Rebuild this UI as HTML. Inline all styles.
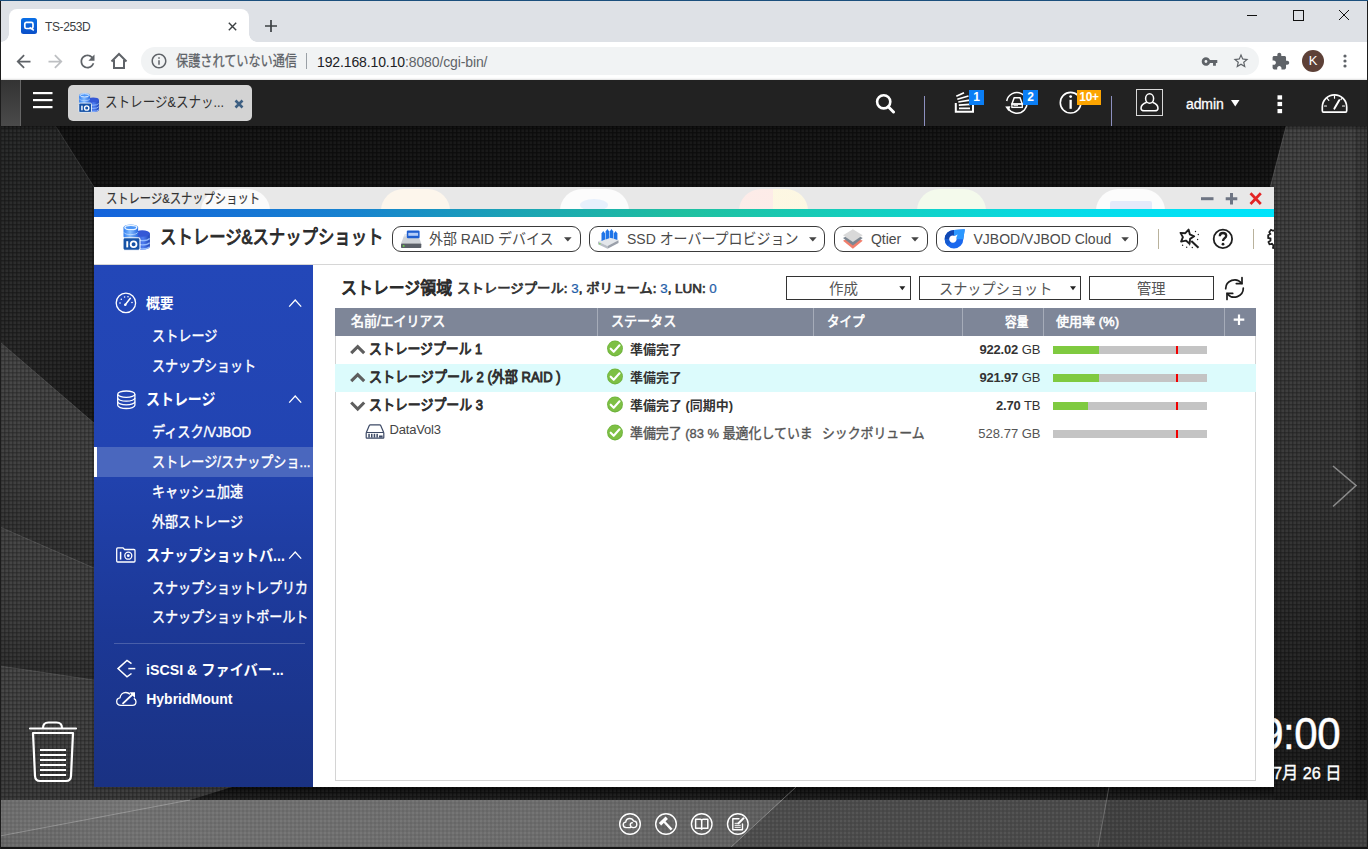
<!DOCTYPE html>
<html lang="ja">
<head>
<meta charset="utf-8">
<title>TS-253D</title>
<style>
*{box-sizing:border-box;margin:0;padding:0}
html,body{width:1368px;height:849px;overflow:hidden;background:#141414;font-family:"Liberation Sans",sans-serif}
.abs,.t{position:absolute}
svg.t{overflow:visible;pointer-events:none}
svg.t text{font-family:"Liberation Sans","Noto Sans CJK JP",sans-serif}
#page{position:relative;width:1368px;height:849px;overflow:hidden}
/* ---------- browser chrome ---------- */
#tabstrip{left:0;top:0;width:1368px;height:42px;background:#dee1e6;border-top:1px solid #1b4f7d}
#tab{left:9px;top:9px;width:240px;height:33px;background:#fff;border-radius:8px 8px 0 0}
#tab:before,#tab:after{content:"";position:absolute;bottom:0;width:8px;height:8px;background:radial-gradient(circle at 0 0,rgba(255,255,255,0) 7.5px,#fff 8px)}
#tab:before{left:-8px}
#tab:after{right:-8px;transform:scaleX(-1)}
#tabtitle{left:45px;top:20px;font-size:12px;line-height:14px;color:#3c4043;letter-spacing:-.4px}
#toolbar{left:0;top:42px;width:1368px;height:38px;background:#fff}
#omni{left:141px;top:47px;width:1118px;height:28px;border-radius:14px;background:#f1f3f4}
#url{left:317px;top:54px;font-size:14px;line-height:16px;color:#202124;white-space:nowrap;letter-spacing:-.12px}
#url span{color:#5f6368}
#lborder{left:0;top:1px;width:1px;height:848px;background:#1c1c1c}
#rborder{left:1367px;top:1px;width:1px;height:848px;background:#1c1c1c}
/* ---------- QTS top bar ---------- */
#topbar{left:0;top:80px;width:1368px;height:46px;background:#222;box-shadow:0 1px 3px rgba(0,0,0,.6)}
#showdesk{left:1px;top:80px;width:20px;height:46px;background:linear-gradient(#333,#4a4a4a);border-right:1px solid #666}
#apptab{left:68px;top:85px;width:184px;height:36px;border-radius:5px;background:#d3d3d3}
.vsep{width:1px;height:30px;top:96px;background:#8d90c0}
.badge{height:15px;top:90px;color:#fff;font-weight:bold;font-size:12px;line-height:15px;text-align:center}
#admin{left:1186px;top:95.5px;font-size:14px;line-height:16px;color:#fff;letter-spacing:-.1px;-webkit-text-stroke:.3px #fff}
/* ---------- window ---------- */
#win{left:94px;top:187px;width:1180px;height:600px;background:#fff;overflow:hidden;box-shadow:0 0 3px rgba(0,0,0,.35)}
#titlebar{left:0;top:0;width:1180px;height:22px;background:#e8e8e8;overflow:hidden}
.ghost{top:2px;width:69px;height:60px;border-radius:22px;background:rgba(255,255,255,.75)}
#gradbar{left:0;top:22px;width:1180px;height:8px;background:linear-gradient(90deg,#1463dc 0%,#1783cf 22%,#1ba4b4 36%,#1fc0a0 50%,#14cfc0 66%,#06dcea 84%,#00e4fb 100%)}
#header{left:0;top:30px;width:1180px;height:48px;background:#fff;border-bottom:1px solid #d6d6d6}
.pill{top:39px;height:26px;border:1px solid #3a3a3a;border-radius:9px;background:#fff}
.pilltxt{font-size:14px;line-height:16px;color:#4a4a4a;top:44px;white-space:nowrap}
.caret{width:0;height:0;border-left:4.5px solid transparent;border-right:4.5px solid transparent;border-top:6px solid #444;top:50px}
.hsep{width:1px;height:20px;top:42px;background:#b9b29c}
#sidebar{left:0;top:78px;width:219px;height:522px;background:linear-gradient(#2347b8 0%,#2244b2 35%,#1c3896 70%,#1a3283 100%)}
#sel{left:0;top:258px;width:219px;height:32px;background:#4a66bd;border-left:3px solid #fff}
#sbsep{left:20px;top:456px;width:192px;height:1px;background:rgba(255,255,255,.28)}
.sbt{color:#fff;font-weight:bold;font-size:14px;line-height:16px;white-space:nowrap}
#content{left:219px;top:78px;width:961px;height:522px;background:#fff}
.btn{top:89px;height:24px;border:1px solid #333;background:#fff}
.bcaret{width:0;height:0;border-left:3px solid transparent;border-right:3px solid transparent;border-top:4px solid #222;top:100px}
#panel{left:240px;top:121px;width:922px;height:474px;border:1px solid #d4d4d4;background:#fff}
#thead{left:240px;top:121px;width:922px;height:28px;background:#7e8698}
.csep{top:121px;width:1px;height:28px;background:#a4aab8}
#rowsel{left:241px;top:177px;width:920px;height:28px;background:#dcfbfc}
.bar{left:959px;width:154px;height:8px;background:#c4c4c4}
.bar i{position:absolute;left:0;top:0;height:8px;background:#7fca40}
.bar b{position:absolute;left:123px;top:0;width:2px;height:8px;background:#f20000}
.cap{width:100px;left:847px;text-align:right;font-size:13px;line-height:16px;color:#333;white-space:nowrap}
.cap b{letter-spacing:-.2px}
.dv{left:296px;top:235px;font-size:13px;line-height:16px;color:#444;letter-spacing:-.2px}
/* ---------- desktop bits ---------- */
#taskbar{left:0;top:800px;width:1368px;height:47px;background:#575757}
#tbbottom{left:0;top:847px;width:1368px;height:2px;background:#161616}
#clock{left:1180px;top:708.500px;width:160px;text-align:right;font-size:43.500px;line-height:50px;color:#fff;letter-spacing:-.5px;transform:scaleX(.965);transform-origin:100% 50%;-webkit-text-stroke:.5px #fff}
</style>
</head>
<body>
<div id="page">

<svg class="abs" id="desk" style="left:0;top:80px" width="1368" height="769" viewBox="0 80 1368 769">
<defs>
<pattern id="dots" width="4" height="4" patternUnits="userSpaceOnUse"><rect width="4" height="4" fill="none"/><rect x="0" y="0" width="4" height="1.500" fill="#000" opacity=".16"/><rect x="0" y="0" width="1.500" height="4" fill="#000" opacity=".16"/><rect x="1.500" y="1.500" width="2.500" height="2.500" fill="#fff" opacity=".035"/></pattern>
<pattern id="dots2" width="4" height="4" patternUnits="userSpaceOnUse"><rect x="0" y="0" width="2" height="2" fill="#fff" opacity=".06"/><rect x="2" y="2" width="2" height="2" fill="#000" opacity=".06"/></pattern>
<linearGradient id="lg1" x1="0" y1="0" x2="0.45" y2="1"><stop offset="0" stop-color="#232424"/><stop offset=".5" stop-color="#252525"/><stop offset=".8" stop-color="#1a1a1a"/><stop offset="1" stop-color="#151515"/></linearGradient>
<linearGradient id="lg2" x1="0.3" y1="0" x2="0" y2="1"><stop offset="0" stop-color="#454545"/><stop offset=".5" stop-color="#3a3a3a"/><stop offset="1" stop-color="#222"/></linearGradient>
<linearGradient id="lg3" x1="0.15" y1="0" x2="0" y2="1"><stop offset="0" stop-color="#424242"/><stop offset=".55" stop-color="#383838"/><stop offset="1" stop-color="#242424"/></linearGradient>
<linearGradient id="lg4" x1="0" y1="0" x2="0" y2="1"><stop offset="0" stop-color="#434343"/><stop offset="1" stop-color="#383838"/></linearGradient>
<linearGradient id="rg1" x1="0" y1="0" x2="0" y2="1"><stop offset="0" stop-color="#404040"/><stop offset=".3" stop-color="#3a3a3a"/><stop offset=".55" stop-color="#333"/><stop offset=".8" stop-color="#202020"/><stop offset="1" stop-color="#171717"/></linearGradient>
<linearGradient id="tb" x1="0" y1="0" x2="1" y2="0"><stop offset="0" stop-color="#666"/><stop offset=".1" stop-color="#707070"/><stop offset=".4" stop-color="#6c6c6c"/><stop offset=".56" stop-color="#5e5e5e"/><stop offset="1" stop-color="#5a5a5a"/></linearGradient>
<linearGradient id="gap" gradientUnits="userSpaceOnUse" x1="0" y1="787" x2="0" y2="800"><stop offset="0" stop-color="#0b0b0b"/><stop offset="1" stop-color="#1f1f1f"/></linearGradient>
</defs>
<rect x="0" y="80" width="1368" height="769" fill="#111"/>
<polygon points="0,120 55,125 200,355 200,520 0,342" fill="url(#lg1)"/>
<polygon points="0,342 200,514 200,620 0,527" fill="url(#lg2)"/>
<polygon points="0,527 200,614 200,700 0,666" fill="url(#lg3)"/>
<polygon points="0,666 260,705 260,800 0,800" fill="url(#lg4)"/>
<polygon points="1287.600,120 1368,120 1368,800 1110,800" fill="url(#rg1)"/>
<rect x="1355" y="125" width="13" height="675" fill="#000" opacity=".12"/>
<polygon points="232,787 1274,787 1274,800 190,800" fill="url(#gap)"/>
<rect x="0" y="800" width="1368" height="47" fill="url(#tb)"/>
<polygon points="0,800 190,800 0,836" fill="#fff" opacity=".04"/>
<polygon points="731,847 782,800 1368,800 1368,847" fill="#000" opacity=".2"/><polygon points="1098,847 1106.600,800 1368,800 1368,847" fill="#000" opacity=".12"/>
<rect x="0" y="120" width="1368" height="680" fill="url(#dots)"/><rect x="0" y="800" width="1368" height="47" fill="url(#dots2)"/>
<g stroke="#fff" stroke-width="1" fill="none">
<path d="M55,125 94,187" opacity=".10"/>
<path d="M0,342 94,423" opacity=".10"/><path d="M0,527 94,568" opacity=".12"/><path d="M0,666 94,680" opacity=".12"/>
<path d="M1286.300,125 1270.500,186" opacity=".14"/>
<path d="M0,836 190,800" opacity=".25"/><path d="M729,849 796,787" opacity=".3"/><path d="M1098,847 1109,787" opacity=".22"/>
</g>
<rect x="0" y="847" width="1368" height="2" fill="#151515"/>
<!-- trash -->
<g fill="none" stroke="#fff" stroke-width="2.2" stroke-linecap="round" stroke-linejoin="round">
<path d="M30,728.5H76"/><path d="M43,728 Q43,722.5 48.5,722.5H56.5Q62,722.5 62,728"/>
<path d="M33,733H73L71,776Q70.7,781 66,781H40Q35.3,781 35,776Z"/>
</g>
<g stroke="#fff" stroke-width="2" stroke-linecap="butt"><path d="M40,750H66M40,755H66M40,760H66M40,765H66M40,770H66M40,775H66"/></g>
<!-- next arrow -->
<path d="M1333,466 1356,485.5 1333,506.5" fill="none" stroke="#8a8a8a" stroke-width="1.6"/>
</svg>
<div class="abs" id="clock">9:00</div>
<svg class="t " role="img" aria-label="7月 26 日" style="left:1273.4px;top:760.8px" width="70.6" height="24" fill="#fff"><text x="0" y="18.05" font-size="16.8" fill="#fff" stroke="#fff" stroke-width="0.37" textLength="68.6" lengthAdjust="spacingAndGlyphs">7月 26 日</text></svg>

<div class="abs" id="tabstrip"></div>
<div class="abs" id="tab"></div>
<svg class="abs" style="left:21px;top:18px" width="16" height="16" viewBox="0 0 16 16"><defs><linearGradient id="fav" x1="0" y1="0" x2="0" y2="1"><stop offset="0" stop-color="#0a6fe6"/><stop offset="1" stop-color="#0a4fc8"/></linearGradient></defs><rect width="16" height="16" rx="2.5" fill="url(#fav)"/><rect x="3.8" y="4.3" width="8.2" height="6.2" rx="1.6" fill="none" stroke="#fff" stroke-width="1.7"/><path d="M8.600 9.300L12.800 12.300" stroke="#fff" stroke-width="1.500"/></svg>
<div class="abs" id="tabtitle">TS-253D</div>
<svg class="abs" style="left:228px;top:21.5px" width="9" height="9" viewBox="0 0 9 9"><path d="M.8.800l7.400 7.400M8.200.800L.8 8.200" stroke="#3c4043" stroke-width="1.400"/></svg>
<svg class="abs" style="left:264px;top:19px" width="14" height="14" viewBox="0 0 14 14"><path d="M7 1v12M1 7h12" stroke="#3c4043" stroke-width="1.700"/></svg>
<svg class="abs" style="left:1240px;top:5px" width="120" height="22" viewBox="1240 5 120 22" fill="none" stroke="#111" stroke-width="1"><path d="M1247,15.500H1257"/><rect x="1293.500" y="10.500" width="10" height="10"/><path d="M1339,10 1349,20M1349,10 1339,20"/></svg>
<div class="abs" id="toolbar"></div>
<div class="abs" id="omni"></div>
<svg class="abs" style="left:12.5px;top:50.5px" width="21" height="21" viewBox="0 0 24 24" fill="#5f6368" ><path d="M20 11H7.83l5.59-5.59L12 4l-8 8 8 8 1.41-1.41L7.83 13H20v-2z"/></svg><svg class="abs" style="transform:scaleX(-1);left:44.5px;top:50.5px" width="21" height="21" viewBox="0 0 24 24" fill="#bdbfc2"><path d="M20 11H7.83l5.59-5.59L12 4l-8 8 8 8 1.41-1.41L7.83 13H20v-2z"/></svg><svg class="abs" style="left:76.5px;top:50.5px" width="21" height="21" viewBox="0 0 24 24" fill="#5f6368" ><path d="M17.65 6.35C16.2 4.9 14.21 4 12 4c-4.42 0-7.99 3.58-7.99 8s3.57 8 7.99 8c3.73 0 6.84-2.55 7.73-6h-2.08c-.82 2.33-3.04 4-5.65 4-3.31 0-6-2.69-6-6s2.69-6 6-6c1.66 0 3.14.69 4.22 1.78L13 11h7V4l-2.35 2.35z"/></svg>
<svg class="abs" style="left:109px;top:51px" width="20" height="20" viewBox="0 0 20 20" fill="none" stroke="#5f6368" stroke-width="2" stroke-linejoin="miter"><path d="M2.500,10.500 10,3 17.500,10.500"/><path d="M5,9V17H15V9"/></svg>
<svg class="abs" style="left:150.0px;top:52.0px" width="18" height="18" viewBox="0 0 24 24" fill="#5f6368" ><path d="M11 7h2v2h-2zm0 4h2v6h-2zm1-9C6.48 2 2 6.48 2 12s4.48 10 10 10 10-4.48 10-10S17.52 2 12 2zm0 18c-4.41 0-8-3.59-8-8s3.590-8 8-8 8 3.590 8 8-3.590 8-8 8z"/></svg><svg class="t " role="img" aria-label="保護されていない通信" style="left:176.0px;top:50.8px" width="123.0" height="20" fill="#5f6368"><text x="0" y="15.15" font-size="14.3" fill="#5f6368" stroke="#5f6368" stroke-width="0.29" textLength="121" lengthAdjust="spacingAndGlyphs">保護されていない通信</text></svg>
<div class="abs" style="left:306px;top:53px;width:1px;height:16px;background:#9aa0a6"></div>
<div class="abs" id="url">192.168.10.10<span>:8080/cgi-bin/</span></div>
<svg class="abs" style="left:1200.5px;top:52.5px" width="17" height="17" viewBox="0 0 24 24" fill="#5f6368" ><path d="M12.65 10C11.83 7.67 9.61 6 7 6c-3.31 0-6 2.69-6 6s2.69 6 6 6c2.61 0 4.83-1.67 5.65-4H17v4h4v-4h2v-4H12.650zM7 14c-1.100 0-2-.9-2-2s.9-2 2-2 2 .9 2 2-.9 2-2 2z"/></svg><svg class="abs" style="left:1232.0px;top:52.0px" width="18" height="18" viewBox="0 0 24 24" fill="#5f6368" ><path d="M22 9.24l-7.19-.62L12 2 9.190 8.630 2 9.240l5.460 4.730L5.820 21 12 17.270 18.180 21l-1.630-7.030L22 9.240zM12 15.400l-3.760 2.270 1-4.280-3.320-2.880 4.380-.38L12 6.100l1.710 4.040 4.380.38-3.320 2.880 1 4.280L12 15.400z"/></svg><svg class="abs" style="left:1271.0px;top:51.5px" width="19" height="19" viewBox="0 0 24 24" fill="#5f6368" ><path d="M20.500 11H19V7c0-1.100-.9-2-2-2h-4V3.500C13 2.120 11.880 1 10.500 1S8 2.120 8 3.500V5H4c-1.100 0-1.990.9-1.990 2v3.800H3.500c1.490 0 2.700 1.210 2.700 2.700s-1.210 2.700-2.700 2.700H2V20c0 1.100.9 2 2 2h3.800v-1.500c0-1.490 1.210-2.700 2.700-2.700 1.490 0 2.700 1.210 2.700 2.700V22H17c1.100 0 2-.9 2-2v-4h1.500c1.380 0 2.500-1.120 2.500-2.500S21.880 11 20.500 11z"/></svg>
<div class="abs" style="left:1302px;top:50px;width:22px;height:22px;border-radius:11px;background:#5d4037;color:#fff;font-size:13px;line-height:22px;text-align:center">K</div>
<svg class="abs" style="left:1343px;top:54px" width="4" height="14" viewBox="0 0 4 14" fill="#5f6368"><circle cx="2" cy="2" r="1.600"/><circle cx="2" cy="7" r="1.600"/><circle cx="2" cy="12" r="1.600"/></svg>



<div class="abs" id="topbar"></div>
<div class="abs" id="showdesk"></div>
<svg class="abs" style="left:33px;top:91px" width="20" height="18" viewBox="0 0 20 18" fill="#fff"><rect x="0" y="1" width="19.500" height="2.200"/><rect x="0" y="8" width="19.500" height="2.200"/><rect x="0" y="15" width="19.500" height="2.200"/></svg>
<div class="abs" id="apptab"></div>
<svg class="abs" style="left:78px;top:92px" width="21" height="21" viewBox="0 0 28 28"><defs><linearGradient id="cy1" x1="0" y1="0" x2="1" y2="0"><stop offset="0" stop-color="#2f7df0"/><stop offset=".45" stop-color="#86bdff"/><stop offset="1" stop-color="#2a6be0"/></linearGradient><linearGradient id="cy2" x1="0" y1="0" x2="1" y2="0"><stop offset="0" stop-color="#2348c0"/><stop offset=".55" stop-color="#4f7df0"/><stop offset="1" stop-color="#1f44b8"/></linearGradient></defs><path d="M12.500,10.500V23.500a7.700,3.300 0 0 0 15.400,0V10.500z" fill="url(#cy2)"/><ellipse cx="20.200" cy="10.500" rx="7.700" ry="3.300" fill="#3558d6"/><path d="M12.800,15.400a7.700,3.100 0 0 0 14.800,0M12.800,19.600a7.700,3.100 0 0 0 14.800,0M12.800,23.600a7.700,3.100 0 0 0 14.800,0" stroke="#9cc2ff" stroke-width="1.300" fill="none" opacity=".9"/><path d="M1.500,4.500V13.500a7.300,3.100 0 0 0 14.600,0V4.500z" fill="url(#cy1)"/><ellipse cx="8.800" cy="4.500" rx="7.300" ry="3.100" fill="#4d96f7"/><ellipse cx="8.800" cy="4.500" rx="5.900" ry="2.200" fill="none" stroke="#eaf4ff" stroke-width="1.300"/><path d="M1.700,9.300a7.300,3 0 0 0 14.200,0" stroke="#cfe4ff" stroke-width="1" fill="none" opacity=".7"/><rect x="1" y="14.800" width="17" height="12.400" rx="1.600" fill="#1552a6" stroke="#fff" stroke-width="1.100"/><rect x="4.300" y="18.200" width="1.900" height="6.200" fill="#fff"/><circle cx="11.600" cy="21.300" r="2.900" fill="none" stroke="#fff" stroke-width="1.800"/></svg><svg class="t " role="img" aria-label="ストレージ&amp;スナッ..." style="left:105.0px;top:92.0px" width="121.0" height="20" fill="#2f2f2f"><text x="0" y="15.26" font-size="14.6" fill="#2f2f2f" textLength="119" lengthAdjust="spacingAndGlyphs">ストレージ&amp;スナッ...</text></svg>
<svg class="abs" style="left:234px;top:98.500px" width="10" height="10" viewBox="0 0 10 10"><path d="M1.500,1.500 8.500,8.500M8.500,1.500 1.500,8.500" stroke="#3d5f82" stroke-width="2.600"/></svg>
<svg class="abs" style="left:874px;top:92px" width="22" height="22" viewBox="874 92 22 22" fill="none" stroke="#fff"><circle cx="883.700" cy="101.800" r="6.600" stroke-width="2.600"/><path d="M888.300,106.800 893.500,112" stroke-width="3" stroke-linecap="round"/></svg>
<div class="abs vsep" style="left:924px"></div>
<svg class="abs" style="left:953px;top:90px" width="24" height="25" viewBox="953 90 24 25" fill="none" stroke="#fff" stroke-width="1.700"><path d="M955.800,103V111.800H973V103" stroke-width="2"/><path d="M959,108.300H970M958.800,105.200 970,104.300M958.300,102 969.800,100.200M957.300,99.200 968.500,96M956.300,96.300 964,92.800"/></svg>
<div class="abs badge" style="left:969px;width:15px;background:#0a7ef5">1</div>
<svg class="abs" style="left:1004px;top:90px" width="26" height="26" viewBox="1004 90 26 26" fill="none" stroke="#fff" stroke-width="1.500"><path d="M1008,108.200A10.300,10.300 0 1 0 1006.700,101"/><path d="M1005.200,106.600 1010.400,106.200 1008.600,111.300z" fill="#fff" stroke="none"/><path d="M1014.200,97.800H1020L1022.300,104H1011.900z"/><rect x="1011.900" y="104" width="10.400" height="3.400" stroke-width="1.300"/><path d="M1013.500,105.700H1018" stroke-width="1"/></svg>
<div class="abs badge" style="left:1023px;width:15px;background:#0a7ef5">2</div>
<svg class="abs" style="left:1058px;top:90px" width="26" height="26" viewBox="1058 90 26 26" fill="none" stroke="#fff" stroke-width="1.600"><circle cx="1070.600" cy="102.700" r="10.300"/><rect x="1069.500" y="99.800" width="2.300" height="9" fill="#fff" stroke="none"/><circle cx="1070.650" cy="96.600" r="1.400" fill="#fff" stroke="none"/></svg>
<div class="abs badge" style="left:1077px;width:24px;background:#fca400;letter-spacing:-.3px">10+</div>
<div class="abs vsep" style="left:1111px"></div>
<svg class="abs" style="left:1136px;top:89px" width="27" height="27" viewBox="0 0 27 27" fill="none" stroke="#fff"><rect x=".5" y=".5" width="26" height="26" stroke="#d8d8d8" stroke-width="1"/><ellipse cx="13.600" cy="9.500" rx="4" ry="4.800" stroke-width="1.500"/><path d="M10.800,13.200C7,14.500 5,16.500 5,19.200 5,21 6.500,21.800 8.500,21.800H18.500C20.500,21.800 22,21 22,19.200 22,16.500 20,14.500 16.400,13.200" stroke-width="1.500"/></svg>
<div class="abs" id="admin">admin</div>
<svg class="abs" style="left:1231px;top:100px" width="9" height="7" viewBox="0 0 9 7"><path d="M0,0H8.500L4.250,6.600z" fill="#fff"/></svg>
<svg class="abs" style="left:1277px;top:95px" width="6" height="19" viewBox="0 0 6 19" fill="#fff"><rect x=".5" y=".3" width="4.600" height="4.200"/><rect x=".5" y="6.900" width="4.600" height="4.200"/><rect x=".5" y="14" width="4.600" height="4.200"/></svg>
<svg class="abs" style="left:1320px;top:92px" width="30" height="23" viewBox="1320 92 30 23" fill="none" stroke="#fff" stroke-width="1.700" stroke-linecap="round"><path d="M1323.500,112.200Q1322.300,112.200 1322.300,110.500V107A12.200,12.200 0 0 1 1346.700,107V110.500Q1346.700,112.200 1345.500,112.200z"/><path d="M1334.400,108.600 1339.200,100.200" stroke-width="2"/><path d="M1334.500,95.800V98.200M1327.300,98.700 1328.800,100.300M1324.500,106H1326.500M1342.500,106H1344.500M1341.700,98.700 1340.900,99.600" stroke-width="1.200"/></svg>

<div class="abs" id="win"><div class="abs" id="titlebar"><div class="abs ghost" style="left:107px;background:rgba(255,255,255,.8)"></div><div class="abs ghost" style="left:287px;background:rgba(255,247,236,.9)"></div><div class="abs ghost" style="left:466px;background:rgba(255,255,255,.85)"></div><div class="abs ghost" style="left:645px;background:linear-gradient(90deg,rgba(255,236,232,.9) 50%,rgba(255,249,226,.9) 50%)"></div><div class="abs ghost" style="left:823px;background:rgba(245,252,236,.9)"></div><div class="abs ghost" style="left:1002px;background:rgba(255,255,255,.85)"></div><div class="abs" style="left:1016px;top:14px;width:42px;height:10px;background:rgba(226,232,250,.9);border-radius:2px"></div><div class="abs" style="left:486px;top:12px;width:28px;height:12px;border-radius:14px/6px;background:rgba(228,238,252,.9)"></div></div>
<svg class="t " role="img" aria-label="ストレージ&amp;スナップショット" style="left:12.0px;top:1.5px" width="156.0" height="19" fill="#333"><text x="0" y="14.40" font-size="13.6" fill="#333" stroke="#333" stroke-width="0.22" textLength="154" lengthAdjust="spacingAndGlyphs">ストレージ&amp;スナップショット</text></svg>
<svg class="abs" style="left:1104px;top:3px" width="68" height="18" viewBox="1198 190 68 18" fill="none"><path d="M1201,198.700H1213.500" stroke="#6e7583" stroke-width="3"/><path d="M1225.700,198.700H1237.300M1231.500,192.900V204.500" stroke="#6e7583" stroke-width="3"/><path d="M1250.500,193.300 1260.800,204M1260.800,193.300 1250.500,204" stroke="#e32424" stroke-width="2.700"/></svg>
<div class="abs" id="gradbar"></div><div class="abs" id="header"></div>
<svg class="abs" style="left:28px;top:36px" width="28" height="28" viewBox="0 0 28 28"><defs><linearGradient id="cy3" x1="0" y1="0" x2="1" y2="0"><stop offset="0" stop-color="#2f7df0"/><stop offset=".45" stop-color="#86bdff"/><stop offset="1" stop-color="#2a6be0"/></linearGradient><linearGradient id="cy4" x1="0" y1="0" x2="1" y2="0"><stop offset="0" stop-color="#2348c0"/><stop offset=".55" stop-color="#4f7df0"/><stop offset="1" stop-color="#1f44b8"/></linearGradient></defs><path d="M12.500,10.500V23.500a7.700,3.300 0 0 0 15.400,0V10.500z" fill="url(#cy4)"/><ellipse cx="20.200" cy="10.500" rx="7.700" ry="3.300" fill="#3558d6"/><path d="M12.800,15.400a7.700,3.100 0 0 0 14.800,0M12.800,19.600a7.700,3.100 0 0 0 14.800,0M12.800,23.600a7.700,3.100 0 0 0 14.800,0" stroke="#9cc2ff" stroke-width="1.300" fill="none" opacity=".9"/><path d="M1.500,4.500V13.500a7.300,3.100 0 0 0 14.600,0V4.500z" fill="url(#cy3)"/><ellipse cx="8.800" cy="4.500" rx="7.300" ry="3.100" fill="#4d96f7"/><ellipse cx="8.800" cy="4.500" rx="5.900" ry="2.200" fill="none" stroke="#eaf4ff" stroke-width="1.300"/><path d="M1.700,9.300a7.300,3 0 0 0 14.200,0" stroke="#cfe4ff" stroke-width="1" fill="none" opacity=".7"/><rect x="1" y="14.800" width="17" height="12.400" rx="1.600" fill="#1552a6" stroke="#fff" stroke-width="1.100"/><rect x="4.300" y="18.200" width="1.900" height="6.200" fill="#fff"/><circle cx="11.600" cy="21.300" r="2.900" fill="none" stroke="#fff" stroke-width="1.800"/></svg>
<svg class="t " role="img" aria-label="ストレージ&amp;スナップショット" style="left:66.0px;top:37.0px" width="225.5" height="27" fill="#2b2b2b"><text x="0" y="20.45" font-size="19.3" fill="#2b2b2b" stroke="#2b2b2b" stroke-width="0.93" textLength="223.5" lengthAdjust="spacingAndGlyphs">ストレージ&amp;スナップショット</text></svg>
<div class="abs pill" style="left:298px;top:39px;width:189px;height:26px;"></div><div class="abs pill" style="left:495px;top:39px;width:236px;height:26px;"></div><div class="abs pill" style="left:740px;top:39px;width:94px;height:26px;"></div><div class="abs pill" style="left:842px;top:39px;width:202px;height:26px;"></div>
<svg class="abs" style="left:306px;top:42px" width="23" height="21" viewBox="400 229 23 21" ><path d="M404.500,234.500H418L421.300,243.500H401z" fill="#cfd3d8"/><path d="M404.500,234.500H418L418.800,236.500H403.800z" fill="#e6e9ec"/><rect x="401" y="243.500" width="20.300" height="4.600" rx=".8" fill="#5b6068"/><rect x="402.800" y="245.200" width="1.700" height="1.500" fill="#6ee24a"/><rect x="406.800" y="230.600" width="12.800" height="7.600" rx="1.200" fill="#1f5fd0"/><rect x="408.300" y="232.800" width="9.800" height="3" fill="#cfe0ff" opacity=".85"/></svg>
<svg class="abs" style="left:502px;top:40px" width="24" height="23" viewBox="596 227 24 23" ><path d="M598,241.500 609,236 618.500,240.200 607.500,246z" fill="#e3e6ea"/><path d="M598,241.500V244.200L607.500,248.800V246z" fill="#b9bec6"/><path d="M607.500,246V248.800L618.500,243V240.200z" fill="#9aa0aa"/><rect x="599.200" y="243.200" width="1.300" height="1.200" fill="#6ee24a"/><g fill="#1e74e8"><path d="M601.500,233.500 603.300,231 605.100,233.500V239.500L601.500,241z"/><path d="M605.600,231.500 607.400,229 609.200,231.500V238.200L605.600,239.500z"/><path d="M609.700,231.500 611.500,229 613.300,231.500V238.500L609.700,237.800z"/><path d="M613.800,233.500 615.600,231 617.400,233.500V240L613.800,238.700z"/></g></svg>
<svg class="abs" style="left:748px;top:41px" width="22" height="22" viewBox="842 228 22 22" ><path d="M843,240.800 852.900,235.800 862.700,240.800 852.900,248.800z" fill="#f07e6c"/><path d="M843,238 852.900,233 862.700,238 852.900,245.500z" fill="#7c8792"/><path d="M843,235.200 852.900,229.200 862.700,235.200 852.900,242z" fill="#d9d9d9"/></svg>
<svg class="abs" style="left:849px;top:41px" width="24" height="22" viewBox="943 228 24 22" ><path d="M954,229.900 964.800,229.300 963.300,239.200A9.300,9.300 0 1 1 954,229.900z" fill="#1a68ee"/><path d="M954,239.200V229.900A9.300,9.300 0 0 0 944.700,239.200z" fill="#0f47b2"/><path d="M954,239.200V229.900L964.800,229.300 963.300,239.200z" fill="#2b98ff"/><path d="M954,239.200 947.400,245.800A9.300,9.300 0 0 1 944.700,239.200z" fill="#155ad0"/><path d="M954.700,235.900 957.600,234.600 956.300,237.700A3.700,3.700 0 1 1 954.700,235.900z" fill="#fff"/></svg>
<svg class="t " role="img" aria-label="外部 RAID デバイス" style="left:335.0px;top:41.0px" width="126.5" height="21" fill="#4a4a4a"><text x="0" y="15.90" font-size="15" fill="#4a4a4a" textLength="124.5" lengthAdjust="spacingAndGlyphs">外部 RAID デバイス</text></svg>
<svg class="t " role="img" aria-label="SSD オーバープロビジョン" style="left:532.5px;top:41.0px" width="173.5" height="21" fill="#4a4a4a"><text x="0" y="15.90" font-size="15" fill="#4a4a4a" textLength="171.5" lengthAdjust="spacingAndGlyphs">SSD オーバープロビジョン</text></svg>
<div class="abs pilltxt" style="left:777px;top:44px;letter-spacing:-.05px">Qtier</div>
<div class="abs pilltxt" style="left:879.5px;top:44px;">VJBOD/VJBOD Cloud</div>
<svg class="abs" style="left:466px;top:47px" width="570" height="10" viewBox="560 234 570 10" fill="#444"><path d="M564,237.200h7.600l-3.800,4.400z"/><path d="M809,237.200h7.600l-3.800,4.400z"/><path d="M911.2,237.200h7.600l-3.800,4.400z"/><path d="M1121.3,237.200h7.600l-3.800,4.400z"/></svg>
<div class="abs hsep" style="left:1064px;top:42px;"></div><div class="abs hsep" style="left:1159px;top:42px;"></div>
<svg class="abs" style="left:1082px;top:40px" width="26" height="24" viewBox="1176 227 26 24" ><path d="M1188.6,229.6 1189.8,234.3 1194.2,236.3 1190.1,238.9 1189.6,243.7 1185.9,240.6 1181.1,241.6 1182.9,237.1 1180.5,232.9 1185.3,233.2z" fill="none" stroke="#1f1f1f" stroke-width="1.900" stroke-linejoin="round"/><path d="M1191.300,241 1198.500,247.800" stroke="#1f1f1f" stroke-width="2.100"/><g fill="#1f1f1f"><circle cx="1195.500" cy="231.500" r=".7"/><circle cx="1198.300" cy="234.500" r=".7"/><circle cx="1197.600" cy="239.500" r=".7"/><circle cx="1182.600" cy="245.300" r=".7"/><circle cx="1186.700" cy="247.300" r=".7"/><circle cx="1192.300" cy="247.500" r=".7"/><circle cx="1189.500" cy="244.800" r=".6"/></g></svg>
<svg class="abs" style="left:1117px;top:40px" width="24" height="24" viewBox="1211 227 24 24" ><circle cx="1222.900" cy="238.900" r="9.200" fill="none" stroke="#1f1f1f" stroke-width="1.800"/><path d="M1219.800,236.300C1219.800,233.900 1221.300,233 1223,233 1224.800,233 1226.200,234 1226.200,235.700 1226.200,238 1223,238.300 1223,241" fill="none" stroke="#1f1f1f" stroke-width="2.300"/><circle cx="1223" cy="244.200" r="1.400" fill="#1f1f1f"/></svg>
<svg class="abs" style="left:1172px;top:41px" width="8" height="22" viewBox="1266 228 8 22" ><path d="M1276,229.500 1273,230.800 1271,229.800 1269.300,232 1270.300,234 1268.200,235.300 1268.200,238 1270.500,238.500 1270.500,240.500 1268.500,242 1269.500,244.300 1272,243.800 1273.500,245.500 1273,247.800 1276,248.500" fill="none" stroke="#1f1f1f" stroke-width="1.800"/></svg>
<div class="abs" id="sidebar"></div>
<div class="abs " style="left:0px;top:260px;width:219px;height:30px;background:#4a67be;border-left:3px solid #fff"></div>
<div class="abs " style="left:20px;top:456px;width:191px;height:1px;background:rgba(255,255,255,.2)"></div>
<svg class="abs" style="left:192px;top:103px" width="18" height="275" viewBox="286 290 18 275" fill="none" stroke="#fff" stroke-width="1.300"><path d="M289.200,306.600 295.200,300 301.200,306.600"/><path d="M289.200,402.600 295.200,396 301.200,402.600"/><path d="M289.200,558.600 295.200,552 301.200,558.600"/></svg>
<svg class="abs" style="left:20px;top:104px" width="24" height="24" viewBox="114 291 24 24" ><circle cx="125.900" cy="302.900" r="9.700" fill="none" stroke="#fff" stroke-width="1.300"/><path d="M125.300,304.800 130.300,298.300" stroke="#fff" stroke-width="1.500" stroke-linecap="round"/><circle cx="125.300" cy="304.800" r="1.300" fill="#fff"/><g fill="#fff"><circle cx="120" cy="303" r=".8"/><circle cx="121.300" cy="299.300" r=".8"/><circle cx="124.600" cy="297" r=".8"/><circle cx="128" cy="296.800" r=".8"/><circle cx="132" cy="302.500" r=".8"/></g></svg>
<svg class="abs" style="left:21px;top:202px" width="23" height="22" viewBox="115 389 23 22" ><g fill="none" stroke="#fff" stroke-width="1.300"><ellipse cx="126.300" cy="394.200" rx="8.600" ry="3.200"/><path d="M117.700,394.200V405.300A8.600,3.200 0 0 0 134.900,405.300V394.200"/><path d="M117.700,398A8.600,3.200 0 0 0 134.900,398M117.700,401.700A8.600,3.200 0 0 0 134.900,401.700"/></g></svg>
<svg class="abs" style="left:21px;top:359px" width="22" height="18" viewBox="115 546 22 18" ><g fill="none" stroke="#fff" stroke-width="1.300"><path d="M116.700,561V548.900Q116.700,547.900 117.700,547.900H123L124.600,549.500H134Q135,549.500 135,550.500V561Q135,562 134,562H117.700Q116.700,562 116.700,561z"/><path d="M120.600,551.800V559.600" stroke-width="1.500"/><circle cx="128.300" cy="555.700" r="3.500"/></g><circle cx="128.300" cy="555.700" r="1.400" fill="#fff"/></svg>
<svg class="abs" style="left:21px;top:471px" width="22" height="21" viewBox="115 658 22 21" ><g fill="none" stroke="#fff" stroke-width="1.500"><path d="M131.500,663.700 127,660.400 118,668.600 127,676.800 131.500,673.500"/><path d="M128.300,668.600H135.300"/></g></svg>
<svg class="abs" style="left:21px;top:503px" width="23" height="18" viewBox="115 690 23 18" ><g fill="none" stroke="#fff" stroke-width="1.300" stroke-linejoin="round"><path d="M121,705.300C118.300,705.300 116.700,703.500 116.700,701.500 116.700,699.500 118.200,698 120,697.800 120.300,694.600 122.800,692.500 125.800,692.500 127.600,692.500 129,693.200 130,694.300M133.800,698.300C135.300,699 136,700.300 136,701.700 136,703.700 134.500,705.300 132.300,705.300H121"/><path d="M122.500,703.800 133.500,693.500" stroke-width="1.800"/></g><path d="M129.300,692.300H135V698z" fill="#fff"/></svg>
<svg class="t " role="img" aria-label="概要" style="left:52.3px;top:106.4px" width="29.7" height="20" fill="#fff"><text x="0" y="15.04" font-size="14" font-weight="bold" fill="#fff" textLength="27.7" lengthAdjust="spacingAndGlyphs">概要</text></svg>
<svg class="t " role="img" aria-label="ストレージ" style="left:52.3px;top:201.2px" width="71.5" height="22" fill="#fff"><text x="0" y="16.76" font-size="16" font-weight="bold" fill="#fff" textLength="69.5" lengthAdjust="spacingAndGlyphs">ストレージ</text></svg>
<svg class="t " role="img" aria-label="スナップショットバ..." style="left:52.2px;top:357.2px" width="140.9" height="22" fill="#fff"><text x="0" y="16.76" font-size="16" font-weight="bold" fill="#fff" textLength="138.9" lengthAdjust="spacingAndGlyphs">スナップショットバ...</text></svg>
<svg class="t " role="img" aria-label="iSCSI &amp; ファイバー..." style="left:52.2px;top:471.5px" width="139.8" height="21" fill="#fff"><text x="0" y="15.90" font-size="15" font-weight="bold" fill="#fff" textLength="137.8" lengthAdjust="spacingAndGlyphs">iSCSI &amp; ファイバー...</text></svg>
<div class="abs sbt" style="left:52.2px;top:504px;">HybridMount</div>
<svg class="t " role="img" aria-label="ストレージ" style="left:57.6px;top:137.9px" width="67.4" height="21" fill="#fff"><text x="0" y="15.90" font-size="15" fill="#fff" stroke="#fff" stroke-width="0.42" textLength="65.4" lengthAdjust="spacingAndGlyphs">ストレージ</text></svg>
<svg class="t " role="img" aria-label="スナップショット" style="left:57.6px;top:167.9px" width="106.1" height="21" fill="#fff"><text x="0" y="15.90" font-size="15" fill="#fff" stroke="#fff" stroke-width="0.42" textLength="104.1" lengthAdjust="spacingAndGlyphs">スナップショット</text></svg>
<svg class="t " role="img" aria-label="ディスク/VJBOD" style="left:57.6px;top:233.5px" width="101.1" height="21" fill="#fff"><text x="0" y="15.90" font-size="15" fill="#fff" stroke="#fff" stroke-width="0.42" textLength="99.1" lengthAdjust="spacingAndGlyphs">ディスク/VJBOD</text></svg>
<svg class="t " role="img" aria-label="ストレージ/スナップショ..." style="left:57.5px;top:263.5px" width="160.5" height="21" fill="#fff"><text x="0" y="15.90" font-size="15" fill="#fff" stroke="#fff" stroke-width="0.42" textLength="158.5" lengthAdjust="spacingAndGlyphs">ストレージ/スナップショ...</text></svg>
<svg class="t " role="img" aria-label="キャッシュ加速" style="left:57.5px;top:294.2px" width="93.1" height="21" fill="#fff"><text x="0" y="15.90" font-size="15" fill="#fff" stroke="#fff" stroke-width="0.42" textLength="91.1" lengthAdjust="spacingAndGlyphs">キャッシュ加速</text></svg>
<svg class="t " role="img" aria-label="外部ストレージ" style="left:57.5px;top:323.9px" width="93.1" height="21" fill="#fff"><text x="0" y="15.90" font-size="15" fill="#fff" stroke="#fff" stroke-width="0.42" textLength="91.1" lengthAdjust="spacingAndGlyphs">外部ストレージ</text></svg>
<svg class="t " role="img" aria-label="スナップショットレプリカ" style="left:57.5px;top:389.5px" width="158.0" height="21" fill="#fff"><text x="0" y="15.90" font-size="15" fill="#fff" stroke="#fff" stroke-width="0.42" textLength="156" lengthAdjust="spacingAndGlyphs">スナップショットレプリカ</text></svg>
<svg class="t " role="img" aria-label="スナップショットボールト" style="left:57.5px;top:419.2px" width="158.3" height="21" fill="#fff"><text x="0" y="15.90" font-size="15" fill="#fff" stroke="#fff" stroke-width="0.42" textLength="156.3" lengthAdjust="spacingAndGlyphs">スナップショットボールト</text></svg>
<svg class="t " role="img" aria-label="ストレージ領域" style="left:247.3px;top:88.6px" width="113.1" height="24" fill="#2b2b2b"><text x="0" y="18.19" font-size="17.2" fill="#2b2b2b" stroke="#2b2b2b" stroke-width="0.96" textLength="111.1" lengthAdjust="spacingAndGlyphs">ストレージ領域</text></svg>
<svg class="t " role="img" aria-label="ストレージプール: 3, ボリューム: 3, LUN: 0" style="left:363.0px;top:92.2px" width="261.8" height="18" fill="#333"><text x="0" y="13.75" font-size="13.2" fill="#333" stroke="#333" stroke-width="0.73" textLength="259.8" lengthAdjust="spacingAndGlyphs">ストレージプール: <tspan fill="#1f5ea8" stroke="#1f5ea8" stroke-width="0.24">3</tspan>, ボリューム: <tspan fill="#1f5ea8" stroke="#1f5ea8" stroke-width="0.24">3</tspan>, LUN: <tspan fill="#1f5ea8" stroke="#1f5ea8" stroke-width="0.24">0</tspan></text></svg>
<div class="abs btn" style="left:692px;top:89px;width:125px;height:24px;"></div><div class="abs btn" style="left:825px;top:89px;width:162px;height:24px;"></div><div class="abs btn" style="left:995px;top:89px;width:124.5px;height:24px;"></div>
<svg class="t " role="img" aria-label="作成" style="left:735.0px;top:90.5px" width="31.0" height="21" fill="#555"><text x="0" y="15.90" font-size="15" fill="#555" textLength="29" lengthAdjust="spacingAndGlyphs">作成</text></svg>
<svg class="t " role="img" aria-label="スナップショット" style="left:844.6px;top:90.5px" width="115.4" height="21" fill="#555"><text x="0" y="15.90" font-size="15" fill="#555" textLength="113.4" lengthAdjust="spacingAndGlyphs">スナップショット</text></svg>
<svg class="t " role="img" aria-label="管理" style="left:1043.0px;top:90.5px" width="30.5" height="21" fill="#555"><text x="0" y="15.90" font-size="15" fill="#555" textLength="28.5" lengthAdjust="spacingAndGlyphs">管理</text></svg>
<svg class="abs" style="left:801px;top:97px" width="190" height="8" viewBox="895 284 190 8" fill="#222"><path d="M899.300,286.300h6l-3,4z"/><path d="M1070,286.300h6l-3,4z"/></svg>
<svg class="abs" style="left:1129px;top:88px" width="26" height="27" viewBox="1223 275 26 27" ><g fill="none" stroke="#1c1c1c" stroke-width="1.700" stroke-linecap="round" stroke-linejoin="miter"><path d="M1225.700,288.700A8.900,8.900 0 0 1 1241.600,283.300"/><path d="M1242,277.600V283.600H1236.300"/><path d="M1243.300,288.100A8.900,8.900 0 0 1 1227.400,293.700"/><path d="M1227,299.400V293.400H1232.700"/></g></svg>
<div class="abs " style="left:240.5px;top:121px;width:921px;height:473px;border:1px solid #d4d4d4;background:#fff"></div>
<div class="abs " style="left:241px;top:121px;width:920.5px;height:28px;background:#7e8698"></div>
<div class="abs " style="left:503px;top:121px;width:1px;height:28px;background:#a6acb9"></div>
<div class="abs " style="left:719px;top:121px;width:1px;height:28px;background:#a6acb9"></div>
<div class="abs " style="left:868px;top:121px;width:1px;height:28px;background:#a6acb9"></div>
<div class="abs " style="left:949px;top:121px;width:1px;height:28px;background:#a6acb9"></div>
<div class="abs " style="left:1130px;top:121px;width:1px;height:28px;background:#a6acb9"></div>
<svg class="t " role="img" aria-label="名前/エイリアス" style="left:257.0px;top:123.8px" width="96.3" height="20" fill="#fff"><text x="0" y="15.04" font-size="14" fill="#fff" stroke="#fff" stroke-width="0.59" textLength="94.3" lengthAdjust="spacingAndGlyphs">名前/エイリアス</text></svg>
<svg class="t " role="img" aria-label="ステータス" style="left:517.0px;top:123.8px" width="67.2" height="20" fill="#fff"><text x="0" y="15.04" font-size="14" fill="#fff" stroke="#fff" stroke-width="0.59" textLength="65.2" lengthAdjust="spacingAndGlyphs">ステータス</text></svg>
<svg class="t " role="img" aria-label="タイプ" style="left:732.7px;top:123.8px" width="39.6" height="20" fill="#fff"><text x="0" y="15.04" font-size="14" fill="#fff" stroke="#fff" stroke-width="0.59" textLength="37.6" lengthAdjust="spacingAndGlyphs">タイプ</text></svg>
<svg class="t " role="img" aria-label="容量" style="left:911.0px;top:124.8px" width="25.3" height="18" fill="#fff"><text x="0" y="13.68" font-size="13" fill="#fff" stroke="#fff" stroke-width="0.55" textLength="23.3" lengthAdjust="spacingAndGlyphs">容量</text></svg>
<svg class="t " role="img" aria-label="使用率 (%)" style="left:962.3px;top:124.8px" width="65.0" height="18" fill="#fff"><text x="0" y="13.68" font-size="13" fill="#fff" stroke="#fff" stroke-width="0.55" textLength="63" lengthAdjust="spacingAndGlyphs">使用率 (%)</text></svg>
<svg class="abs" style="left:1138px;top:126px" width="14" height="14" viewBox="1232 313 14 14" ><path d="M1233.700,319.700H1244.300M1239,314.400V325" stroke="#fff" stroke-width="2.200"/></svg>
<div class="abs " style="left:241px;top:177px;width:920.5px;height:28px;background:#dcfbfc"></div>
<svg class="abs" style="left:254px;top:153px" width="19" height="75" viewBox="348 340 19 75" fill="none" stroke="#5e5e5e" stroke-width="3.100"><path d="M351.200,353.1 357.700,346.6 364.200,353.1"/><path d="M351.200,381.1 357.700,374.6 364.200,381.1"/><path d="M351.200,402.500 357.700,409 364.200,402.500"/></svg>
<svg class="t " role="img" aria-label="ストレージプール 1" style="left:275.2px;top:151.3px" width="115.2" height="21" fill="#2e2e2e"><text x="0" y="15.83" font-size="14.8" fill="#2e2e2e" stroke="#2e2e2e" stroke-width="0.92" textLength="113.2" lengthAdjust="spacingAndGlyphs">ストレージプール 1</text></svg>
<svg class="t " role="img" aria-label="ストレージプール 2 (外部 RAID )" style="left:275.2px;top:179.3px" width="193.6" height="21" fill="#2e2e2e"><text x="0" y="15.83" font-size="14.8" fill="#2e2e2e" stroke="#2e2e2e" stroke-width="0.92" textLength="191.6" lengthAdjust="spacingAndGlyphs">ストレージプール 2 (外部 RAID )</text></svg>
<svg class="t " role="img" aria-label="ストレージプール 3" style="left:275.2px;top:207.3px" width="116.0" height="21" fill="#2e2e2e"><text x="0" y="15.83" font-size="14.8" fill="#2e2e2e" stroke="#2e2e2e" stroke-width="0.92" textLength="114" lengthAdjust="spacingAndGlyphs">ストレージプール 3</text></svg>
<svg class="abs" style="left:270px;top:236px" width="22" height="17" viewBox="364 423 22 17" ><g fill="none" stroke="#3d4a66" stroke-width="1.200"><path d="M366.300,432.500 369.300,425.500Q369.600,424.800 370.400,424.800H379.600Q380.400,424.800 380.700,425.500L383.700,432.500"/><rect x="366.200" y="432.500" width="17.600" height="5.700" rx=".6"/></g><g fill="#3d4a66"><rect x="368.300" y="433.800" width="1.500" height="3.800"/><rect x="371" y="433.800" width="1.500" height="3.800"/><rect x="373.700" y="433.800" width="1.500" height="3.800"/><rect x="376.400" y="433.800" width="1.500" height="3.800"/><rect x="379" y="435.500" width="3.600" height="2.100"/></g></svg>
<div class="abs dv" style="left:295.6px;top:234.5px;">DataVol3</div>
<svg class="abs" style="left:512px;top:151px" width="18" height="104" viewBox="606 338 18 104" ><circle cx="615" cy="348.5" r="7.900" fill="#6eb33c"/><circle cx="615" cy="348.2" r="7" fill="#7ec045"/><path d="M610.700,348.7 613.700,351.800 619.500,345.300" fill="none" stroke="#fff" stroke-width="2.100" stroke-linecap="round" stroke-linejoin="round"/><circle cx="615" cy="376.500" r="7.900" fill="#6eb33c"/><circle cx="615" cy="376.200" r="7" fill="#7ec045"/><path d="M610.700,376.700 613.700,379.800 619.500,373.300" fill="none" stroke="#fff" stroke-width="2.100" stroke-linecap="round" stroke-linejoin="round"/><circle cx="615" cy="404.500" r="7.900" fill="#6eb33c"/><circle cx="615" cy="404.200" r="7" fill="#7ec045"/><path d="M610.700,404.700 613.700,407.800 619.500,401.300" fill="none" stroke="#fff" stroke-width="2.100" stroke-linecap="round" stroke-linejoin="round"/><circle cx="615" cy="432.500" r="7.900" fill="#6eb33c"/><circle cx="615" cy="432.200" r="7" fill="#7ec045"/><path d="M610.700,432.700 613.700,435.800 619.500,429.300" fill="none" stroke="#fff" stroke-width="2.100" stroke-linecap="round" stroke-linejoin="round"/></svg>
<svg class="t " role="img" aria-label="準備完了" style="left:536.0px;top:152.5px" width="53.8" height="18" fill="#333"><text x="0" y="13.68" font-size="13" font-weight="bold" fill="#333" textLength="51.8" lengthAdjust="spacingAndGlyphs">準備完了</text></svg>
<svg class="t " role="img" aria-label="準備完了" style="left:536.0px;top:180.5px" width="53.8" height="18" fill="#333"><text x="0" y="13.68" font-size="13" font-weight="bold" fill="#333" textLength="51.8" lengthAdjust="spacingAndGlyphs">準備完了</text></svg>
<svg class="t " role="img" aria-label="準備完了 (同期中)" style="left:536.0px;top:208.5px" width="105.0" height="18" fill="#333"><text x="0" y="13.68" font-size="13" font-weight="bold" fill="#333" textLength="103" lengthAdjust="spacingAndGlyphs">準備完了 (同期中)</text></svg>
<div class="abs" style="left:536px;top:233px;width:182px;height:26px;overflow:hidden"><svg class="t " role="img" aria-label="準備完了 (83 % 最適化しています)" style="left:0.0px;top:3.5px" width="202.0" height="19" fill="#555"><text x="0" y="14.36" font-size="13.5" fill="#555" stroke="#555" stroke-width="0.38" textLength="200" lengthAdjust="spacingAndGlyphs">準備完了 (83 % 最適化しています)</text></svg></div>
<svg class="t " role="img" aria-label="シックボリューム" style="left:728.0px;top:236.0px" width="104.5" height="20" fill="#555"><text x="0" y="15.04" font-size="14" fill="#555" stroke="#555" stroke-width="0.39" textLength="102.5" lengthAdjust="spacingAndGlyphs">シックボリューム</text></svg>
<div class="abs cap" style="left:846.5px;top:155px;width:100px;height:16px;"><b>922.02</b> GB</div>
<div class="abs cap" style="left:846.5px;top:183px;width:100px;height:16px;"><b>921.97</b> GB</div>
<div class="abs cap" style="left:846.5px;top:211px;width:100px;height:16px;"><b>2.70</b> TB</div>
<div class="abs cap" style="left:846.5px;top:239px;width:100px;height:16px;color:#555">528.77 GB</div>
<div class="abs bar" style="left:959px;top:159px;width:154px;height:8px;"><i style="width:46px"></i><b></b></div>
<div class="abs bar" style="left:959px;top:187px;width:154px;height:8px;"><i style="width:46px"></i><b></b></div>
<div class="abs bar" style="left:959px;top:215px;width:154px;height:8px;"><i style="width:35px"></i><b></b></div>
<div class="abs bar" style="left:959px;top:243px;width:154px;height:8px;"><b></b></div></div>

<svg class="abs" style="left:615px;top:810px" width="140" height="28" viewBox="615 810 140 28" fill="none" stroke="#fff" stroke-width="1.400" stroke-linecap="round" stroke-linejoin="round">
<circle cx="630" cy="824" r="10.300"/><circle cx="666" cy="824" r="10.300"/><circle cx="701.700" cy="824" r="10.300"/><circle cx="737.800" cy="824" r="10.300"/>
<path d="M630.500,827.600H626.300C624.300,827.600 623.200,826.300 623.200,824.800 623.200,823.300 624.300,822.200 625.700,822.100 626,819.800 627.800,818.500 629.800,818.500 631.600,818.500 633,819.500 633.600,821 635.600,821 636.800,822.500 636.800,824.200 636.800,826 635.500,827.600 633.500,827.600 631.300,827.600 630.300,826 630.300,824.700 630.300,823.500 631.200,822.700 632.300,822.700"/>
<path d="M660,824.300 666.800,817.800" stroke-width="3.400" stroke-linecap="butt"/><path d="M664.300,821.800 671.600,829.600" stroke-width="2.400" stroke-linecap="butt"/>
<path d="M695.600,819.300H700.200Q701.700,819.300 701.700,820.800V829.200Q701.700,828.300 700.200,828.300H695.600zM707.800,819.300H703.200Q701.700,819.300 701.700,820.800V829.200Q701.700,828.300 703.200,828.300H707.800z" stroke-width="1.500"/>
<path d="M739,818.800H732.800V829.700H742.500V824" stroke-width="1.400"/><path d="M735,823.300H738M735,825.300H740.300M735,827.300H740.300" stroke-width="1"/><path d="M738.500,823.300 743.500,818.300" stroke-width="2.200"/>
</svg>
<div class="abs" id="lborder"></div><div class="abs" id="rborder"></div>

</div>
</body>
</html>
